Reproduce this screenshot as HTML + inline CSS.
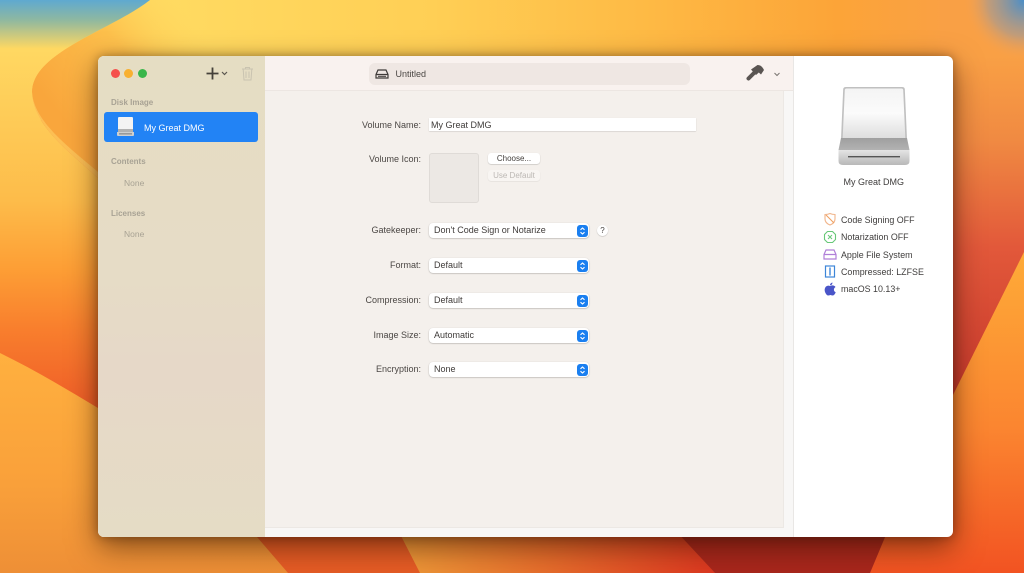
<!DOCTYPE html>
<html><head><meta charset="utf-8"><style>
*{box-sizing:border-box;margin:0;padding:0}
html,body{width:1024px;height:573px;overflow:hidden;background:#f90}
body{position:relative;font-family:"Liberation Sans",sans-serif;color:#3a3633;font-size:9px}
.a{position:absolute}
.t{position:absolute;white-space:nowrap;line-height:12px}
.lbl{position:absolute;white-space:nowrap;text-align:right;right:603px;line-height:12px;font-size:9px;color:#4b4744}
.sel{position:absolute;left:429px;width:160px;height:15px;background:#fff;border-radius:4px;box-shadow:0 .5px 1.5px rgba(0,0,0,.3);font-size:9px;line-height:15px;padding-left:5px;color:#3f3b39}
.sel i{position:absolute;right:1px;top:1.5px;width:11px;height:12px;border-radius:3px;background:#1a7ff0}
.sel svg{position:absolute;right:1px;top:1.5px}
.btn{position:absolute;left:488px;width:52px;height:11px;background:#fff;border-radius:3px;box-shadow:0 .5px 1px rgba(0,0,0,.25);font-size:8px;line-height:11px;text-align:center;color:#45413e}
.sec{position:absolute;left:111px;font-size:8px;font-weight:bold;color:#a8a294;line-height:10px}
.none{position:absolute;left:124px;font-size:8.5px;color:#a8a294;line-height:10px}
.st{position:absolute;left:841px;font-size:8.9px;line-height:12px;color:#3f3d3c;white-space:nowrap}
</style></head><body>
<svg class="a" style="left:0;top:0" width="1024" height="573" viewBox="0 0 1024 573">
<defs>
<linearGradient id="bg" gradientUnits="userSpaceOnUse" x1="150" y1="0" x2="960" y2="0"><stop offset="0" stop-color="#ffdb62"/><stop offset=".35" stop-color="#ffcf55"/><stop offset=".62" stop-color="#feb944"/><stop offset=".85" stop-color="#fca438"/><stop offset="1" stop-color="#f9a045"/></linearGradient>
<linearGradient id="leftg" gradientUnits="userSpaceOnUse" x1="0" y1="0" x2="0" y2="573"><stop offset="0" stop-color="#5fa9d0"/><stop offset=".035" stop-color="#8fb8a0"/><stop offset=".085" stop-color="#ffd862"/><stop offset=".35" stop-color="#fdbc4a"/><stop offset=".47" stop-color="#fd9e35"/><stop offset=".576" stop-color="#f87e2d"/><stop offset=".7" stop-color="#f06028"/><stop offset="1" stop-color="#f06028"/></linearGradient>
<linearGradient id="swoosh" gradientUnits="userSpaceOnUse" x1="185" y1="10" x2="60" y2="115"><stop offset="0" stop-color="#ffd65c" stop-opacity="0"/><stop offset=".45" stop-color="#fdc04c"/><stop offset="1" stop-color="#f9a63c"/></linearGradient>
<linearGradient id="ly" gradientUnits="userSpaceOnUse" x1="0" y1="353" x2="0" y2="573"><stop offset="0" stop-color="#ffb03f"/><stop offset=".6" stop-color="#f9a03a"/><stop offset="1" stop-color="#ee8f36"/></linearGradient>
<linearGradient id="rr" gradientUnits="userSpaceOnUse" x1="0" y1="0" x2="0" y2="400"><stop offset="0" stop-color="#f9a045"/><stop offset=".14" stop-color="#f9a045"/><stop offset=".35" stop-color="#f08a42"/><stop offset=".62" stop-color="#e2583a"/><stop offset="1" stop-color="#c8382c"/></linearGradient>
<linearGradient id="ro" gradientUnits="userSpaceOnUse" x1="0" y1="252" x2="0" y2="573"><stop offset="0" stop-color="#feab38"/><stop offset=".55" stop-color="#fb8530"/><stop offset="1" stop-color="#f25322"/></linearGradient>
<linearGradient id="bot2" gradientUnits="userSpaceOnUse" x1="400" y1="0" x2="715" y2="0"><stop offset="0" stop-color="#ef9a38"/><stop offset=".45" stop-color="#e86f2c"/><stop offset="1" stop-color="#dd3820"/></linearGradient>
<radialGradient id="blue" gradientUnits="userSpaceOnUse" cx="1024" cy="0" r="60"><stop offset="0" stop-color="#4a8ec8"/><stop offset=".6" stop-color="#a89a90" stop-opacity=".7"/><stop offset="1" stop-color="#f7a155" stop-opacity="0"/></radialGradient>
</defs>
<rect width="1024" height="573" fill="#e65c25"/>
<rect width="960" height="120" fill="url(#bg)"/>
<rect x="940" width="84" height="410" fill="url(#rr)"/>
<rect x="940" width="84" height="90" fill="url(#blue)"/>
<path d="M150 0H330V60H98V178C70 152 32 125 32 92C32 52 112 30 150 0Z" fill="url(#swoosh)"/>
<path d="M0 0H150C112 30 32 52 32 92C32 125 70 152 98 178V573H0Z" fill="url(#leftg)"/>
<path d="M32 92C32 125 70 152 98 178L98 172C70 148 34 122 32 92Z" fill="#ffd468" opacity=".55"/>
<path d="M0 353C35 370 68 390 98 408L257 537L288 573H0Z" fill="url(#ly)"/>
<path d="M1024 252L953 395L885 537L870 573H1024Z" fill="url(#ro)"/>
<path d="M398 530L420 573H715L675 530Z" fill="url(#bot2)"/>
<path d="M675 530H888L870 573H715Z" fill="#a9271c"/>
</svg>
<div class="a" style="left:98px;top:56px;width:855px;height:481px;border-radius:6px;box-shadow:0 10px 30px rgba(40,15,0,.55),0 0 10px rgba(40,15,0,.35)"></div>
<div class="a" style="left:98px;top:56px;width:855px;height:481px;border-radius:6px;overflow:hidden;background:#fff">
 <div class="a" style="left:0;top:0;width:167px;height:481px;background:linear-gradient(180deg,#e5ddc3 0%,#e6dcc6 45%,#e6d8c8 65%,#e5dcc5 100%)"></div>
 <div class="a" style="left:167px;top:0;width:529px;height:35px;background:#f9f2ef;border-bottom:1px solid #ece6e2"></div>
 <div class="a" style="left:167px;top:35px;width:519px;height:437px;background:#f4f0ec;border-right:1px solid #ece8e4;border-bottom:1px solid #ece8e4"></div>
 <div class="a" style="left:167px;top:472px;width:529px;height:9px;background:#f8f7f6"></div>
 <div class="a" style="left:686px;top:35px;width:10px;height:446px;background:#f8f7f6"></div>
 <div class="a" style="left:695px;top:0;width:1px;height:481px;background:#e9e7e5"></div>
</div>
<div class="a" style="left:111px;top:69px;width:9px;height:9px;border-radius:50%;background:#f5504c"></div>
<div class="a" style="left:124px;top:69px;width:9px;height:9px;border-radius:50%;background:#f8b030"></div>
<div class="a" style="left:138px;top:69px;width:9px;height:9px;border-radius:50%;background:#3ab64a"></div>
<svg class="a" style="left:205px;top:66px" width="26" height="15" viewBox="0 0 26 15"><path d="M7.500 1.500V13.500M1.500 7.500H13.500" stroke="#45413a" stroke-width="1.800" fill="none"/><path d="M17 6L19.500 8.500L22 6" stroke="#5a564e" stroke-width="1.200" fill="none"/></svg>
<svg class="a" style="left:241px;top:66px" width="13" height="15" viewBox="0 0 13 15"><path d="M1 3H12M4.500 3V1.500H8.500V3M2.200 3.500L3 14H10L10.800 3.500M5 5.500V12M8 5.500V12" stroke="#c9c3b0" stroke-width="1" fill="none"/></svg>
<div class="sec" style="top:98px">Disk Image</div>
<div class="a" style="left:104px;top:112px;width:154px;height:30px;background:#2283f5;border-radius:3px"></div>
<svg class="a" style="left:116px;top:116px" width="19" height="21" viewBox="0 0 19 21"><path d="M3 1H16Q17 1 17 2.500V13H2V2.500Q2 1 3 1Z" fill="#f3f3f3"/><rect x="2" y="13" width="15" height="3" fill="#b1b1b1"/><path d="M1 16H18V19Q18 20 17 20H2Q1 20 1 19Z" fill="#cfcfcf"/><rect x="3" y="17.500" width="13" height=".8" fill="#666"/></svg>
<div class="t" style="left:144px;top:122px;color:#fff;font-size:9px">My Great DMG</div>
<div class="sec" style="top:157px">Contents</div>
<div class="none" style="top:178px">None</div>
<div class="sec" style="top:209px">Licenses</div>
<div class="none" style="top:229px">None</div>
<div class="a" style="left:369px;top:63px;width:321px;height:22px;background:#efe7e3;border-radius:6px"></div>
<svg class="a" style="left:375px;top:68px" width="14" height="12" viewBox="0 0 14 12"><path d="M3 2H11L13 6.500V10H1V6.500Z M1 6.500H13" stroke="#3f3b39" stroke-width="1.200" fill="none"/><path d="M3 8.300H11" stroke="#3f3b39" stroke-width="1"/></svg>
<div class="t" style="left:395.500px;top:68px;color:#4b4744;font-size:9px">Untitled</div>
<svg class="a" style="left:745px;top:64px" width="20" height="19" viewBox="0 0 20 19"><path d="M3.500 14.500L10 8" stroke="#5a5552" stroke-width="4" stroke-linecap="round" fill="none"/><path d="M6 5.500L12.500 1Q16.500 .8 19 6L16 10.500L13.800 8.500L11 11Z" fill="#5a5552"/></svg>
<svg class="a" style="left:773px;top:71px" width="8" height="6" viewBox="0 0 8 6"><path d="M1.500 2L4 4.500L6.500 2" stroke="#7a7571" stroke-width="1" fill="none"/></svg>
<div class="lbl" style="top:119px">Volume Name:</div>
<div class="a" style="left:429px;top:118px;width:267px;height:13px;background:#fff;box-shadow:0 .5px 1px rgba(0,0,0,.18)"></div>
<div class="t" style="left:431px;top:119px;color:#3f3b39;font-size:9px">My Great DMG</div>
<div class="lbl" style="top:153px">Volume Icon:</div>
<div class="a" style="left:429px;top:153px;width:50px;height:50px;background:#ece8e4;border:1px solid #dfdbd7;border-radius:3px"></div>
<div class="btn" style="top:153px">Choose...</div>
<div class="btn" style="top:170px;background:#f8f5f2;color:#bcb8b4;box-shadow:0 .5px 1px rgba(0,0,0,.1)">Use Default</div>
<div class="lbl" style="top:224px">Gatekeeper:</div>
<div class="sel" style="top:223px">Don't Code Sign or Notarize<i></i><svg width="11" height="12" viewBox="0 0 11 12"><path d="M3.500 4.800L5.500 3L7.500 4.800M3.500 7.200L5.500 9L7.500 7.200" stroke="#fff" stroke-width="1.100" fill="none"/></svg></div>
<div class="a" style="left:597px;top:225px;width:11px;height:11px;border-radius:50%;background:#fff;box-shadow:0 .5px 1px rgba(0,0,0,.25);font-size:8px;line-height:11px;text-align:center;color:#45413e">?</div>
<div class="lbl" style="top:259px">Format:</div>
<div class="sel" style="top:258px">Default<i></i><svg width="11" height="12" viewBox="0 0 11 12"><path d="M3.500 4.800L5.500 3L7.500 4.800M3.500 7.200L5.500 9L7.500 7.200" stroke="#fff" stroke-width="1.100" fill="none"/></svg></div>
<div class="lbl" style="top:294px">Compression:</div>
<div class="sel" style="top:293px">Default<i></i><svg width="11" height="12" viewBox="0 0 11 12"><path d="M3.500 4.800L5.500 3L7.500 4.800M3.500 7.200L5.500 9L7.500 7.200" stroke="#fff" stroke-width="1.100" fill="none"/></svg></div>
<div class="lbl" style="top:329px">Image Size:</div>
<div class="sel" style="top:328px">Automatic<i></i><svg width="11" height="12" viewBox="0 0 11 12"><path d="M3.500 4.800L5.500 3L7.500 4.800M3.500 7.200L5.500 9L7.500 7.200" stroke="#fff" stroke-width="1.100" fill="none"/></svg></div>
<div class="lbl" style="top:363px">Encryption:</div>
<div class="sel" style="top:362px">None<i></i><svg width="11" height="12" viewBox="0 0 11 12"><path d="M3.500 4.800L5.500 3L7.500 4.800M3.500 7.200L5.500 9L7.500 7.200" stroke="#fff" stroke-width="1.100" fill="none"/></svg></div>
<svg class="a" style="left:836px;top:85px" width="76" height="82" viewBox="0 0 76 82"><defs><linearGradient id="dk" x1="0" y1="0" x2="0" y2="1"><stop offset="0" stop-color="#f4f4f4"/><stop offset=".5" stop-color="#fbfbfb"/><stop offset="1" stop-color="#dedede"/></linearGradient><linearGradient id="dk2" x1="0" y1="0" x2="0" y2="1"><stop offset="0" stop-color="#e4e4e4"/><stop offset="1" stop-color="#b8b8b8"/></linearGradient><linearGradient id="dk3" x1="0" y1="0" x2="0" y2="1"><stop offset="0" stop-color="#9f9f9f"/><stop offset="1" stop-color="#b2b2b2"/></linearGradient></defs><path d="M5 54L7.200 4Q7.500 2 10 2H66Q68.500 2 68.800 4L71 54Z" fill="#c0c0c0"/><path d="M6.700 53L8.800 5Q9 3.500 10.500 3.500H65.500Q67 3.500 67.200 5L69.300 53Z" fill="url(#dk)"/><path d="M5 53H71L73.500 65H2.500Z" fill="url(#dk3)"/><path d="M2.500 65H73.500V76Q73.500 80 69 80H7Q2.500 80 2.500 76Z" fill="url(#dk2)"/><rect x="12" y="71" width="52" height="1.400" fill="#555"/></svg>
<div class="t" style="left:843.500px;top:176px;font-size:9px;color:#3f3d3c">My Great DMG</div>
<svg class="a" style="left:823px;top:212px" width="14" height="14" viewBox="0 0 14 14"><path d="M2 2.500Q5 2.500 7 1.500Q9 2.500 12 2.500V7Q12 11 7 13Q2 11 2 7Z" fill="none" stroke="#f0b48a" stroke-width="1.100"/><path d="M3 3L11 11" stroke="#f0a060" stroke-width="1.100"/></svg>
<div class="st" style="top:214px">Code Signing OFF</div>
<svg class="a" style="left:823px;top:230px" width="14" height="14" viewBox="0 0 14 14"><path d="M4.500 1.500H9.500L12.500 4.500V9.500L9.500 12.500H4.500L1.500 9.500V4.500Z" fill="none" stroke="#68c878" stroke-width="1.100" stroke-linejoin="round"/><path d="M5 5L9 9M9 5L5 9" stroke="#68c878" stroke-width="1"/></svg>
<div class="st" style="top:231px">Notarization OFF</div>
<svg class="a" style="left:823px;top:248px" width="14" height="13" viewBox="0 0 14 13"><path d="M3 2H11L13 6.500V11H1V6.500Z M1 6.500H13" stroke="#b07fd8" stroke-width="1.200" fill="none"/></svg>
<div class="st" style="top:249px">Apple File System</div>
<svg class="a" style="left:824px;top:265px" width="12" height="13" viewBox="0 0 12 13"><rect x="1.500" y="1" width="9" height="11" fill="none" stroke="#3d86d8" stroke-width="1.200"/><path d="M6 2.500V10.500" stroke="#3d86d8" stroke-width="1.400"/></svg>
<div class="st" style="top:266px">Compressed: LZFSE</div>
<svg class="a" style="left:824px;top:282px" width="12" height="14" viewBox="0 0 12 14"><path d="M6 4Q8 3 9.500 3.500Q11 4 11.500 5Q9.500 6.300 10 8.500Q10.300 9.800 11.700 10.300Q10.500 13.500 8.800 13.500Q7.800 13.500 6.500 13Q5 13.500 4 13.500Q2.500 13.500 1 10Q0 6.500 2 4.500Q4 3 6 4Z" fill="#4a55c8"/><path d="M6 3.300Q6 1 8.500 .5Q8.500 3 6 3.300Z" fill="#4a55c8"/></svg>
<div class="st" style="top:283px">macOS 10.13+</div>
</body></html>
